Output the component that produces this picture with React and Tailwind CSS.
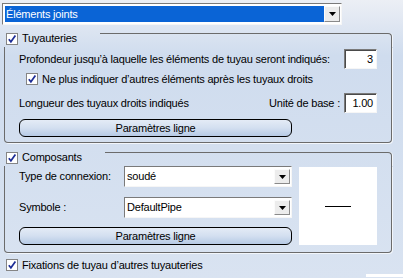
import React from "react";

function Check() {
  return (
    <span className="flex h-[12px] w-[12px] shrink-0 items-center justify-center border border-[#858585] bg-white">
      <svg width="10" height="10" viewBox="0 0 10 10">
        <path d="M1.8 5.3 L3.9 7.8 L8.4 1.6" fill="none" stroke="#1d2d96" strokeWidth="1.7" />
      </svg>
    </span>
  );
}

function Arrow({ h = "h-[16px]" }) {
  return (
    <span className={`flex ${h} w-[16px] shrink-0 items-center justify-center border border-t-[#fbfbfb] border-l-[#fbfbfb] border-r-[#8a8a8a] border-b-[#8a8a8a] bg-[#ececec]`}>
      <svg width="7" height="4" viewBox="0 0 7 4">
        <path d="M0 0H7L3.5 4Z" fill="#000" />
      </svg>
    </span>
  );
}

function Input({ value }) {
  return (
    <div className="flex h-[20px] w-[33px] shrink-0 items-center justify-end border border-[#7a7a7a] border-r-[#f6f6f6] border-b-[#f6f6f6] bg-white pr-[3px] shadow-[inset_1px_1px_0_#4a4a4a]">
      {value}
    </div>
  );
}

function Select({ value }) {
  return (
    <div className="flex h-[21px] w-[168px] shrink-0 items-center border border-[#7a7a7a] border-r-[#f6f6f6] border-b-[#f6f6f6] bg-white pl-[2px] pr-[1px]">
      <span className="flex-1">{value}</span>
      <Arrow h="h-[15px]" />
    </div>
  );
}

function Button() {
  return (
    <div className="flex h-[18px] w-[273px] items-center justify-center rounded-[6px] border border-black bg-linear-to-b from-[#e4ebf6] via-[#d3dff0] to-[#b6cae5]">
      Paramètres ligne
    </div>
  );
}

function GroupHeader({ label, w }) {
  return (
    <div className="flex h-[16px]">
      <div className={`flex h-[14px] ${w} items-center pl-[2px] pt-[1px]`}>
        <Check />
        <span className="ml-[4px]">{label}</span>
      </div>
      <div className="mt-[2px] flex-1 rounded-tr-[4px] border-t border-r border-[#6b6b6b] shadow-[1px_0_0_#f2f6fb]" />
    </div>
  );
}

export default function App() {
  return (
    <div className="h-[278px] w-[403px] overflow-hidden bg-linear-to-b from-[#eceff5] from-0% via-[#cfdcee] via-20% to-[#d9e3f1] to-100% font-['Liberation_Sans',Arial,sans-serif] text-[11px] tracking-[-0.2px] text-black">
      <div className="pt-[3px] pl-[2px]">
        <div className="flex h-[22px] w-[340px] items-center border border-[#7a7a7a] border-r-[#f6f6f6] border-b-[#f6f6f6] bg-white pl-[2px] pr-[1px]">
          <div className="flex h-[16px] flex-1 items-center bg-[#0a64d6] pl-[1px] text-white">Éléments joints</div>
          <Arrow />
        </div>
      </div>

      <div className="ml-[4px] mt-[6px] w-[388px]">
        <GroupHeader label="Tuyauteries" w="w-[96px]" />
        <div className="rounded-b-[4px] border-x border-b border-[#6b6b6b] px-[14px] pt-[2px] pb-[5px] shadow-[1px_1px_0_#f2f6fb]">
          <div className="flex h-[20px] items-center">
            <span className="flex-1">Profondeur jusqu’à laquelle les éléments de tuyau seront indiqués:</span>
            <Input value="3" />
          </div>
          <div className="mt-[3px] flex h-[14px] items-center pl-[7px]">
            <Check />
            <span className="ml-[4px]">Ne plus indiquer d’autres éléments après les tuyaux droits</span>
          </div>
          <div className="mt-[7px] flex h-[20px] items-center">
            <span className="flex-1">Longueur des tuyaux droits indiqués</span>
            <span className="mr-[4px]">Unité de base :</span>
            <Input value="1.00" />
          </div>
          <div className="mt-[6px]">
            <Button />
          </div>
        </div>
      </div>

      <div className="ml-[4px] mt-[7px] w-[388px]">
        <GroupHeader label="Composants" w="w-[101px]" />
        <div className="flex rounded-b-[4px] border-x border-b border-[#6b6b6b] px-[14px] pb-[7px] shadow-[1px_1px_0_#f2f6fb]">
          <div className="w-[273px]">
            <div className="flex h-[21px] items-center">
              <span className="w-[105px]">Type de connexion:</span>
              <Select value="soudé" />
            </div>
            <div className="mt-[10px] flex h-[21px] items-center">
              <span className="w-[105px]">Symbole :</span>
              <Select value="DefaultPipe" />
            </div>
            <div className="mt-[9px]">
              <Button />
            </div>
          </div>
          <div className="ml-[7px] mt-[1px] flex h-[78px] w-[78px] items-center justify-center bg-white">
            <div className="h-px w-[26px] bg-black" />
          </div>
        </div>
      </div>

      <div className="mt-[5px] flex h-[14px] items-center pl-[6px]">
        <Check />
        <span className="ml-[4px]">Fixations de tuyau d’autres tuyauteries</span>
      </div>
      <div className="mt-[2px] flex justify-end">
        <div className="h-[3px] w-[37px] bg-white" />
      </div>
    </div>
  );
}
